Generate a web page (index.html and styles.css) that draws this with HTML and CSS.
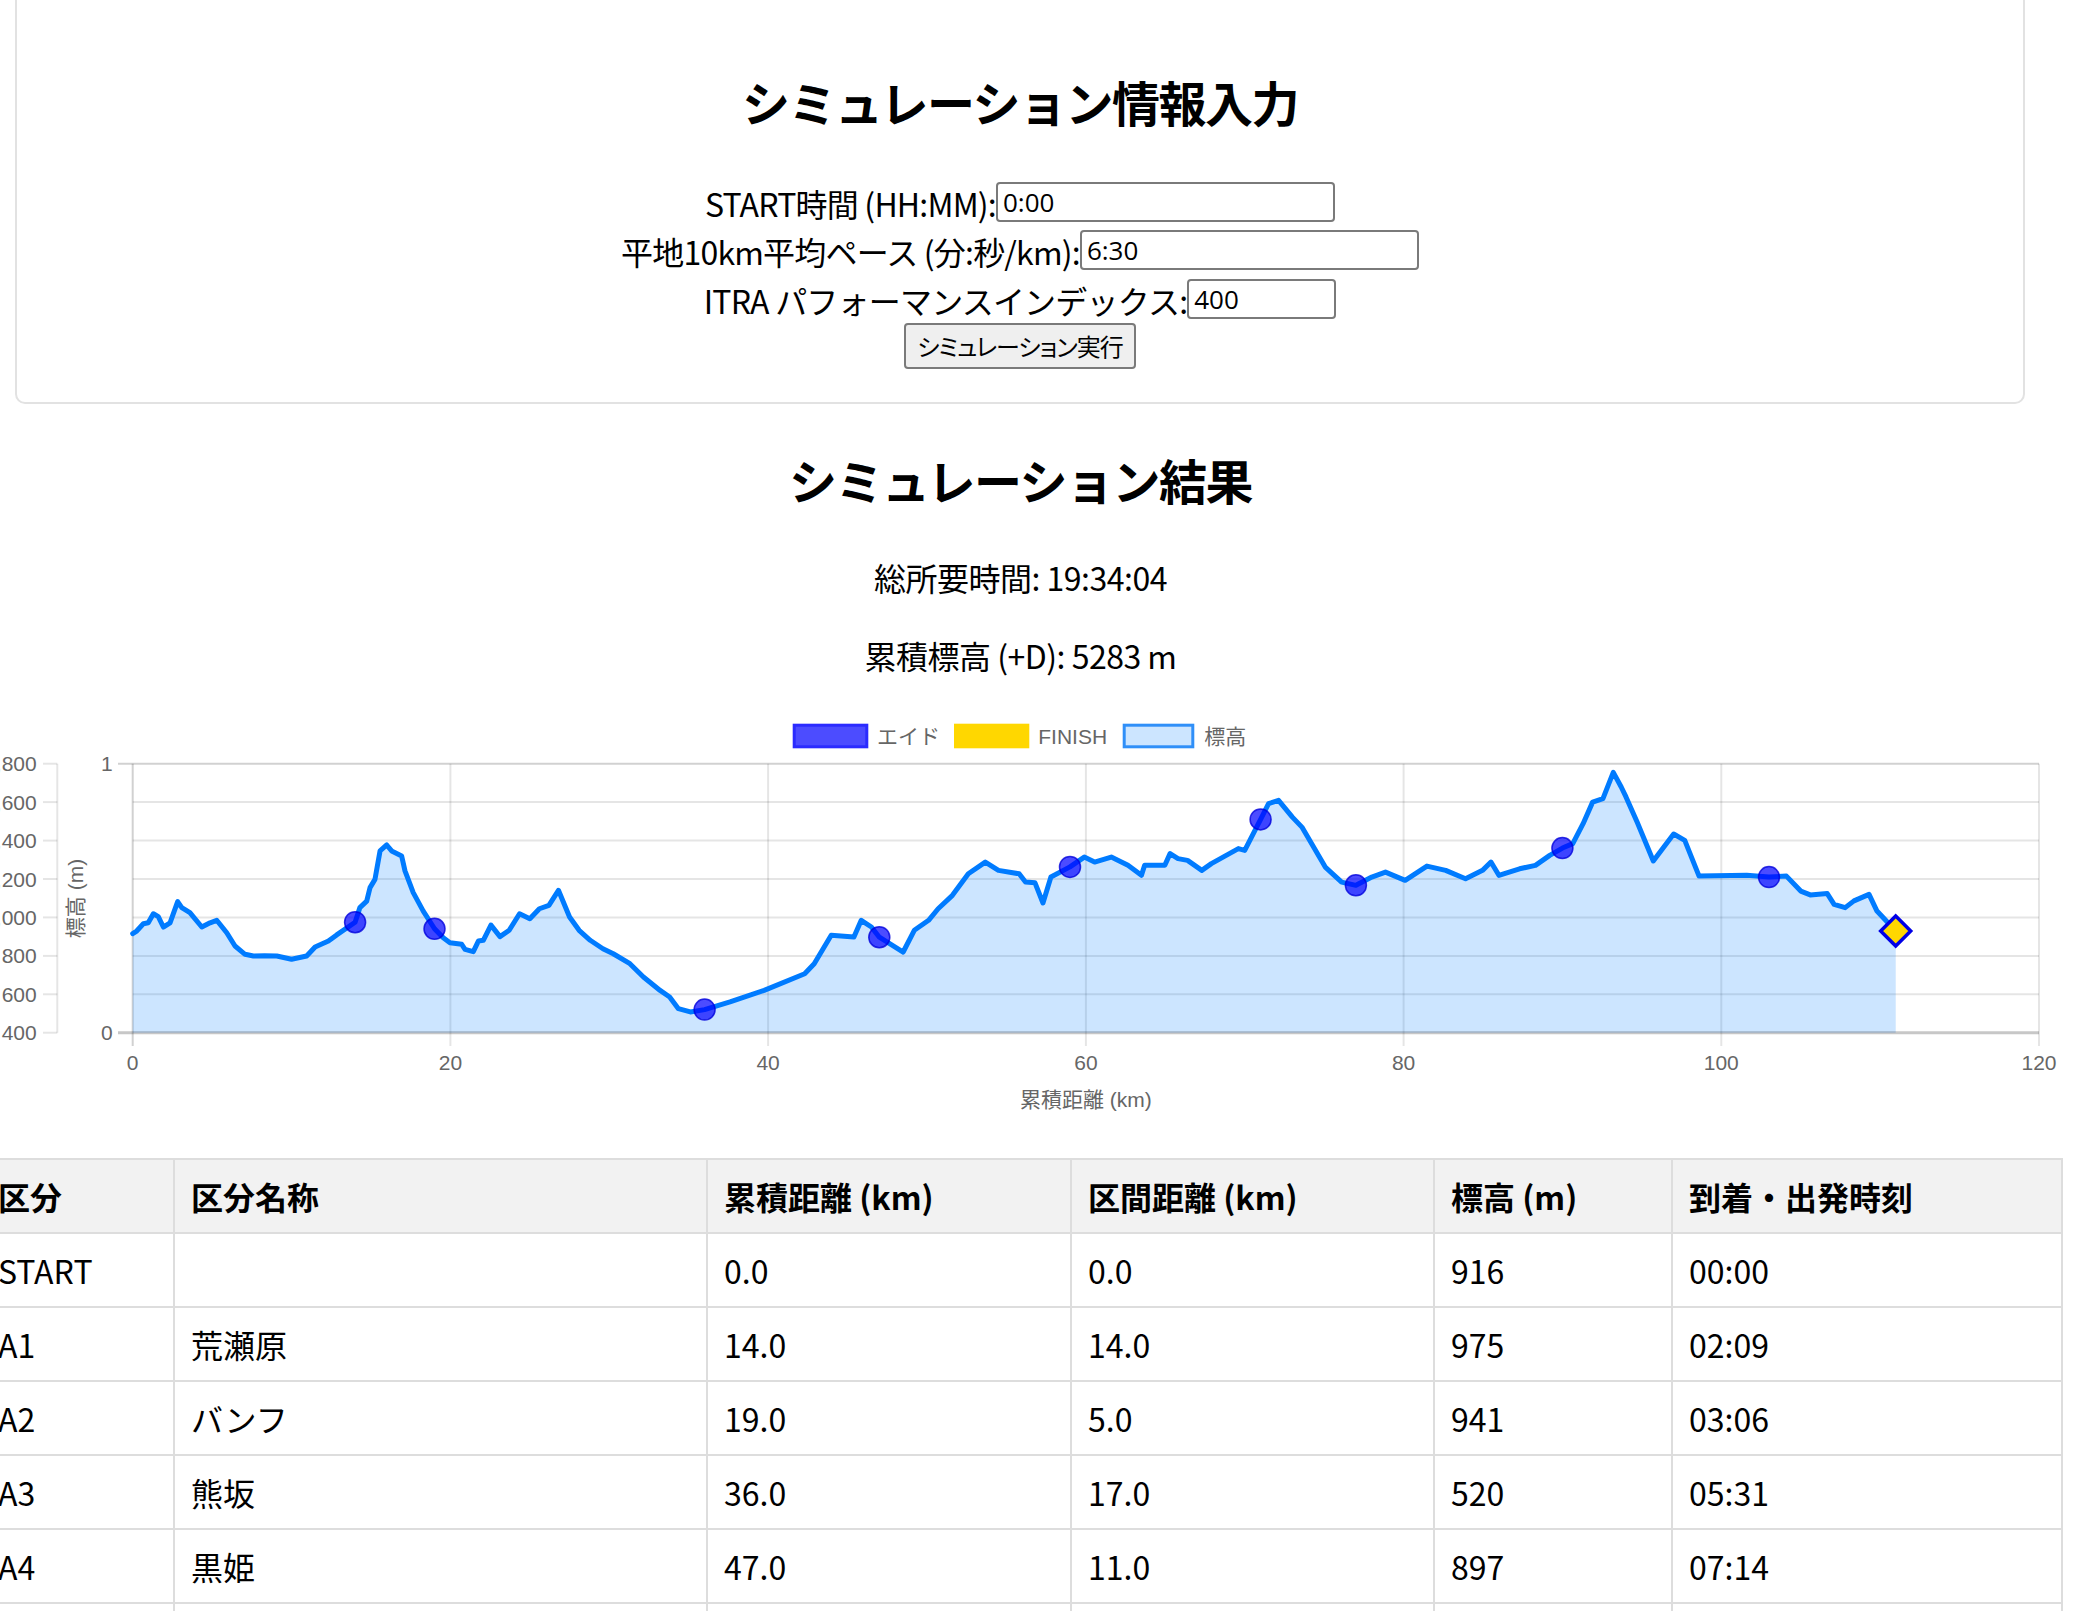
FILE: index.html
```html
<!DOCTYPE html>
<html lang="ja">
<head>
<meta charset="utf-8">
<title>シミュレーション</title>
<link rel="stylesheet" href="styles.css">
</head>
<body>
<section class="card">
  <h2 class="title">シミュレーション情報入力</h2>
  <div class="form-row"><label for="start">START時間 (HH:MM):</label><input id="start" class="in in-wide" type="text" value="0:00"></div>
  <div class="form-row"><label for="pace">平地10km平均ペース (分:秒/km):</label><input id="pace" class="in in-wide" type="text" value="6:30"></div>
  <div class="form-row"><label for="itra">ITRA パフォーマンスインデックス:</label><input id="itra" class="in in-narrow" type="text" value="400"></div>
  <div class="btn-row"><button class="btn" type="button">シミュレーション実行</button></div>
</section>

<section class="results">
  <h2 class="title title-results">シミュレーション結果</h2>
  <p class="stat">総所要時間: 19:34:04</p>
  <p class="stat">累積標高 (+D): 5283 m</p>
</section>

<svg class="chart" width="2094" height="440" viewBox="0 0 2094 440" xmlns="http://www.w3.org/2000/svg">
  <!-- legend -->
  <g class="legend">
    <rect x="794.2" y="24.2" width="72.6" height="21.6" fill="rgba(0,0,255,0.7)" stroke="#2b2bff" stroke-width="3"/>
    <text x="877" y="42.5">エイド</text>
    <rect x="954" y="22.7" width="75.3" height="24.6" fill="#ffd700"/>
    <text x="1038.3" y="42.5">FINISH</text>
    <rect x="1124.2" y="24.2" width="68.6" height="21.6" fill="#cce5ff" stroke="#2f8ff8" stroke-width="3"/>
    <text x="1204.3" y="42.5">標高</text>
  </g>

  <!-- grid -->
  <g class="grid">
    <line x1="132.7" y1="101.1" x2="2039" y2="101.1"/>
    <line x1="132.7" y1="139.6" x2="2039" y2="139.6"/>
    <line x1="132.7" y1="178.0" x2="2039" y2="178.0"/>
    <line x1="132.7" y1="216.4" x2="2039" y2="216.4"/>
    <line x1="132.7" y1="254.9" x2="2039" y2="254.9"/>
    <line x1="132.7" y1="293.3" x2="2039" y2="293.3"/>
    <line x1="450.4" y1="62.7" x2="450.4" y2="345"/>
    <line x1="768.1" y1="62.7" x2="768.1" y2="345"/>
    <line x1="1085.9" y1="62.7" x2="1085.9" y2="345"/>
    <line x1="1403.6" y1="62.7" x2="1403.6" y2="345"/>
    <line x1="1721.3" y1="62.7" x2="1721.3" y2="345"/>
    <line x1="2039" y1="62.7" x2="2039" y2="345"/>
    <line x1="43" y1="62.7" x2="57.3" y2="62.7"/>
    <line x1="43" y1="101.1" x2="57.3" y2="101.1"/>
    <line x1="43" y1="139.6" x2="57.3" y2="139.6"/>
    <line x1="43" y1="178.0" x2="57.3" y2="178.0"/>
    <line x1="43" y1="216.4" x2="57.3" y2="216.4"/>
    <line x1="43" y1="254.9" x2="57.3" y2="254.9"/>
    <line x1="43" y1="293.3" x2="57.3" y2="293.3"/>
    <line x1="43" y1="331.7" x2="57.3" y2="331.7"/>
    <line x1="57.3" y1="62.7" x2="57.3" y2="331.7"/>
  </g>
  <g class="axis-border">
    <line x1="118" y1="62.7" x2="2039" y2="62.7"/>
    <line x1="132.7" y1="62.7" x2="132.7" y2="345"/>
  </g>

  <!-- elevation profile in data units (km, m) -->
  <g transform="matrix(15.886 0 0 -0.19214 132.7 408.556)">
    <path class="area" d="M0,400 L0,916 0.25,929 0.67,967 0.98,972 1.3,1019 1.61,1004 1.93,950 2.35,972 2.83,1082 3.09,1051 3.6,1025 4.35,950 4.87,972 5.29,985 5.92,920 6.44,851 7.07,808 7.6,799 8.3,801 9.07,799 10,782 10.95,799 11.48,846 12.32,877 12.84,909 14,975 14.3,1051 14.73,1085 14.94,1155 15.25,1198 15.57,1346 15.99,1377 16.3,1346 16.93,1320 17.14,1242 17.66,1129 18.29,1033 19,941 19.55,894 19.97,868 20.71,860 20.92,834 21.44,822 21.76,877 22.07,881 22.55,960 23.12,900 23.7,933 24.35,1019 25,993 25.6,1045 26.2,1063 26.8,1141 27.5,1002 28.1,933 28.8,881 29.6,837 30.25,811 31.3,759 32.15,690 33.2,620 33.8,586 34.35,525 35.1,508 36,520 37.6,560 39.75,620 42.3,707 42.9,759 43.97,907 45.4,898 45.86,985 46.5,950 47,897 48.5,820 49.2,933 50.1,985 50.7,1045 51.6,1115 52.6,1227 53.67,1288 54.5,1245 55.8,1227 56.2,1184 56.8,1180 57.3,1075 57.8,1210 59,1263 59.9,1314 60.55,1288 61.6,1314 62.65,1271 63.5,1219 63.7,1271 64.97,1271 65.3,1332 65.8,1306 66.4,1297 67.3,1245 67.9,1280 69.6,1358 70,1349 71,1510 71.5,1592 72.13,1609 73,1522 73.6,1470 75.07,1262 76.1,1184 77,1167 78,1210 78.86,1236 80.1,1193 81.47,1267 82.65,1245 83.9,1201 84.97,1245 85.5,1288 86,1219 87.3,1253 88.3,1271 89.2,1323 90,1361 90.65,1384 91.3,1488 91.9,1600 92.55,1618 93.2,1755 93.7,1679 94,1627 94.7,1496 95.72,1294 97,1434 97.7,1401 98.6,1215 101.6,1219 103,1210 104.1,1215 105,1137 105.6,1117 106.67,1124 107.1,1068 107.8,1051 108.35,1086 109.3,1120 109.8,1033 110.98,929 L110.98,400 Z"/>
    <path class="profile" vector-effect="non-scaling-stroke" d="M0,916 L0.25,929 0.67,967 0.98,972 1.3,1019 1.61,1004 1.93,950 2.35,972 2.83,1082 3.09,1051 3.6,1025 4.35,950 4.87,972 5.29,985 5.92,920 6.44,851 7.07,808 7.6,799 8.3,801 9.07,799 10,782 10.95,799 11.48,846 12.32,877 12.84,909 14,975 14.3,1051 14.73,1085 14.94,1155 15.25,1198 15.57,1346 15.99,1377 16.3,1346 16.93,1320 17.14,1242 17.66,1129 18.29,1033 19,941 19.55,894 19.97,868 20.71,860 20.92,834 21.44,822 21.76,877 22.07,881 22.55,960 23.12,900 23.7,933 24.35,1019 25,993 25.6,1045 26.2,1063 26.8,1141 27.5,1002 28.1,933 28.8,881 29.6,837 30.25,811 31.3,759 32.15,690 33.2,620 33.8,586 34.35,525 35.1,508 36,520 37.6,560 39.75,620 42.3,707 42.9,759 43.97,907 45.4,898 45.86,985 46.5,950 47,897 48.5,820 49.2,933 50.1,985 50.7,1045 51.6,1115 52.6,1227 53.67,1288 54.5,1245 55.8,1227 56.2,1184 56.8,1180 57.3,1075 57.8,1210 59,1263 59.9,1314 60.55,1288 61.6,1314 62.65,1271 63.5,1219 63.7,1271 64.97,1271 65.3,1332 65.8,1306 66.4,1297 67.3,1245 67.9,1280 69.6,1358 70,1349 71,1510 71.5,1592 72.13,1609 73,1522 73.6,1470 75.07,1262 76.1,1184 77,1167 78,1210 78.86,1236 80.1,1193 81.47,1267 82.65,1245 83.9,1201 84.97,1245 85.5,1288 86,1219 87.3,1253 88.3,1271 89.2,1323 90,1361 90.65,1384 91.3,1488 91.9,1600 92.55,1618 93.2,1755 93.7,1679 94,1627 94.7,1496 95.72,1294 97,1434 97.7,1401 98.6,1215 101.6,1219 103,1210 104.1,1215 105,1137 105.6,1117 106.67,1124 107.1,1068 107.8,1051 108.35,1086 109.3,1120 109.8,1033 110.98,929"/>
  </g>

  <line class="x-base" x1="118" y1="331.7" x2="2039" y2="331.7"/>

  <g class="aid">
    <circle cx="355.1" cy="221.2" r="10.5"/>
    <circle cx="434.5" cy="227.8" r="10.5"/>
    <circle cx="704.6" cy="308.6" r="10.5"/>
    <circle cx="879.3" cy="236.2" r="10.5"/>
    <circle cx="1070.0" cy="165.9" r="10.5"/>
    <circle cx="1260.6" cy="118.4" r="10.5"/>
    <circle cx="1355.9" cy="184.3" r="10.5"/>
    <circle cx="1562.4" cy="147.1" r="10.5"/>
    <circle cx="1769.0" cy="176.1" r="10.5"/>
  </g>
  <polygon class="finish" points="1895.7,215 1910.7,230 1895.7,245 1880.7,230"/>

  <g class="ticks y-ticks">
    <text x="36.7" y="70.2">1,800</text>
    <text x="36.7" y="108.6">1,600</text>
    <text x="36.7" y="147.1">1,400</text>
    <text x="36.7" y="185.5">1,200</text>
    <text x="36.7" y="223.9">1,000</text>
    <text x="36.7" y="262.4">800</text>
    <text x="36.7" y="300.8">600</text>
    <text x="36.7" y="339.2">400</text>
    <text x="112.7" y="70.2">1</text>
    <text x="112.7" y="339.2">0</text>
  </g>
  <g class="ticks x-ticks">
    <text x="132.7" y="369">0</text>
    <text x="450.4" y="369">20</text>
    <text x="768.1" y="369">40</text>
    <text x="1085.9" y="369">60</text>
    <text x="1403.6" y="369">80</text>
    <text x="1721.3" y="369">100</text>
    <text x="2039" y="369">120</text>
  </g>
  <text class="axis-title" transform="translate(83 197.5) rotate(-90)">標高 (m)</text>
  <text class="axis-title" x="1085.9" y="406">累積距離 (km)</text>
</svg>

<table class="segments">
  <colgroup>
    <col class="c1"><col class="c2"><col class="c3"><col class="c4"><col class="c5"><col class="c6">
  </colgroup>
  <thead>
    <tr><th>区分</th><th>区分名称</th><th>累積距離 (km)</th><th>区間距離 (km)</th><th>標高 (m)</th><th>到着・出発時刻</th></tr>
  </thead>
  <tbody>
    <tr><td>START</td><td></td><td>0.0</td><td>0.0</td><td>916</td><td>00:00</td></tr>
    <tr><td>A1</td><td>荒瀬原</td><td>14.0</td><td>14.0</td><td>975</td><td>02:09</td></tr>
    <tr><td>A2</td><td>バンフ</td><td>19.0</td><td>5.0</td><td>941</td><td>03:06</td></tr>
    <tr><td>A3</td><td>熊坂</td><td>36.0</td><td>17.0</td><td>520</td><td>05:31</td></tr>
    <tr><td>A4</td><td>黒姫</td><td>47.0</td><td>11.0</td><td>897</td><td>07:14</td></tr>
    <tr><td>A5</td><td>笹ヶ峰</td><td>59.0</td><td>12.0</td><td>1263</td><td>09:25</td></tr>
  </tbody>
</table>
</body>
</html>
```

FILE: styles.css
```css
html {
  overflow: hidden;
}

body {
  margin: 0;
  background: #ffffff;
  color: #000000;
  font-family: "Noto Sans CJK JP", "Open Sans", sans-serif;
}

/* input card */
.card {
  box-sizing: border-box;
  width: 2010px;
  margin: -11px 0 0 15px;
  padding: 40px 20px 33px;
  border: 2px solid #e2e2e2;
  border-radius: 10px;
  text-align: center;
}

.title {
  height: 60px;
  margin: 40px 0 46.5px;
  font-family: "Noto Sans CJK JP", sans-serif;
  font-size: 48px;
  font-weight: 700;
  line-height: 60px;
  letter-spacing: -1.5px;
  text-align: center;
}

.form-row {
  display: flex;
  justify-content: center;
  align-items: center;
  height: 48.5px;
  font-size: 32px;
  line-height: 44px;
}

.form-row label {
  padding-top: 2px;
  letter-spacing: -0.8px;
}

.in {
  box-sizing: border-box;
  height: 40px;
  margin: 0;
  padding: 0 5px;
  border: 2px solid #7a7a7a;
  border-radius: 4px;
  background: #ffffff;
  color: #000000;
  font-family: "Open Sans", "Noto Sans CJK JP", sans-serif;
  font-size: 26px;
}

.in-wide {
  width: 339px;
}

.in-narrow {
  width: 149px;
}

.btn-row {
  display: flex;
  justify-content: center;
}

.btn {
  box-sizing: border-box;
  height: 46px;
  margin: 0;
  padding: 0 11px;
  border: 2px solid #7a7a7a;
  border-radius: 4px;
  background: #efefef;
  color: #000000;
  font-family: "Noto Sans CJK JP", sans-serif;
  font-size: 24px;
  font-feature-settings: "palt";
  letter-spacing: -1px;
  line-height: 40px;
}

/* results */
.results {
  width: 2081px;
  margin-left: -20px;
  text-align: center;
}

.title-results {
  margin: 45px 0 46px;
}

.stat {
  height: 44px;
  margin: 34px 0 0;
  font-size: 32px;
  line-height: 44px;
  letter-spacing: -0.5px;
}

/* chart */
.chart {
  display: block;
  margin-top: 24px;
  font-family: "Liberation Sans", "Noto Sans CJK JP", sans-serif;
}

.legend text {
  fill: #666666;
  font-size: 21px;
}

.grid line {
  stroke: rgba(0, 0, 0, 0.1);
  stroke-width: 2;
}

.axis-border line {
  stroke: rgba(0, 0, 0, 0.18);
  stroke-width: 2;
}

.x-base {
  stroke: rgba(0, 0, 0, 0.22);
  stroke-width: 3;
}

.area {
  fill: rgba(0, 123, 255, 0.2);
  stroke: none;
}

.profile {
  fill: none;
  stroke: #007bff;
  stroke-width: 5;
  stroke-linejoin: round;
  stroke-linecap: round;
}

.aid circle {
  fill: rgba(0, 0, 255, 0.7);
  stroke: rgba(0, 0, 220, 0.8);
  stroke-width: 1.5;
}

.finish {
  fill: #ffd700;
  stroke: #0000e6;
  stroke-width: 3.5;
  stroke-linejoin: miter;
}

.ticks text {
  fill: #666666;
  font-size: 21px;
}

.y-ticks text {
  text-anchor: end;
}

.x-ticks text {
  text-anchor: middle;
}

.axis-title {
  fill: #666666;
  font-size: 21px;
  text-anchor: middle;
}

/* table */
.segments {
  box-sizing: border-box;
  width: 2081px;
  margin: 17px 0 0 -20px;
  border-collapse: collapse;
  table-layout: fixed;
  font-size: 32px;
}

.c1 { width: 193px; }
.c2 { width: 533px; }
.c3 { width: 364px; }
.c4 { width: 363px; }
.c5 { width: 238px; }
.c6 { width: 390px; }

.segments th,
.segments td {
  padding: 16px;
  border: 2px solid #dddddd;
  line-height: 40px;
  text-align: left;
  white-space: nowrap;
}

.segments th {
  background: #f2f2f2;
  font-weight: 700;
}
```
